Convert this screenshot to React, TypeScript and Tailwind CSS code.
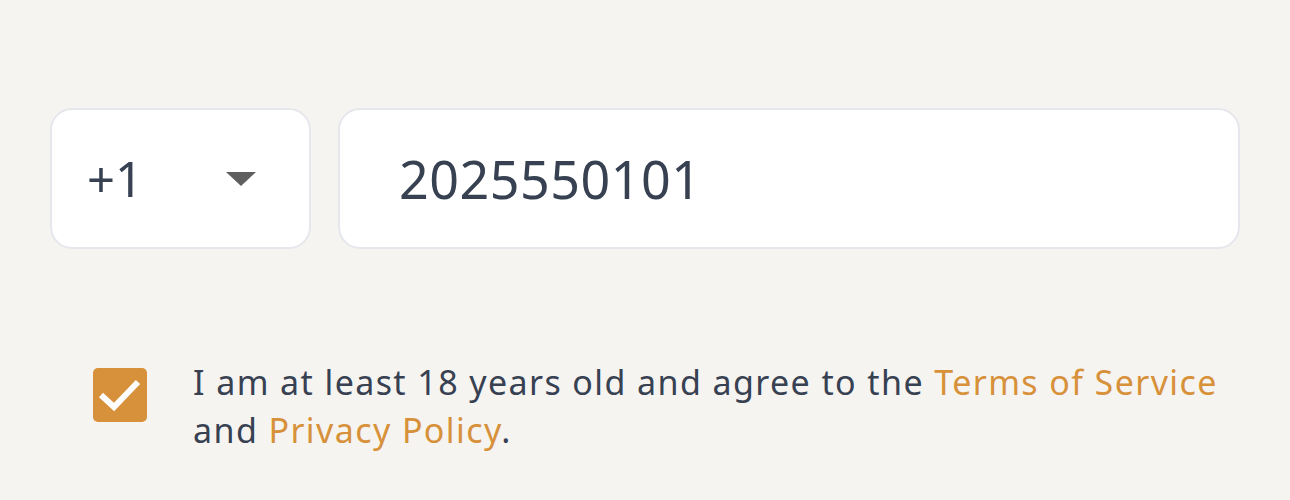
export default function App() {
  return (
    <main
      className="w-[1290px] h-[500px] bg-[#f6f4f1] px-[50px] pt-[108px]"
      style={{ fontFamily: '"Noto Sans", "Open Sans", sans-serif' }}
    >
      <div className="flex gap-[27px]">
        <div className="w-[261px] h-[141px] shrink-0 bg-white border-[2.5px] border-[#e6e7ec] rounded-[22px] flex items-center justify-between pl-[35px] pr-[53px]">
          <span className="text-[49px] text-[#374151] leading-none">+1</span>
          <svg width="30" height="14" viewBox="0 0 30 14">
            <path d="M0 0 H30 L15 14 Z" fill="#5f5f5f" />
          </svg>
        </div>
        <div className="flex-1 h-[141px] bg-white border-[2.5px] border-[#e6e7ec] rounded-[22px] flex items-center pl-[59px]">
          <span className="text-[52px] text-[#374151] leading-none tracking-[0.5px]">2025550101</span>
        </div>
      </div>
      <div className="flex items-start mt-[119px] pl-[43px]">
        <div className="w-[54px] h-[54px] shrink-0 rounded-[5px] bg-[#d6913a]">
          <svg width="54" height="54" viewBox="0 0 54 54">
            <path d="M8 27 L21 39 L45 14" fill="none" stroke="#ffffff" strokeWidth="6" />
          </svg>
        </div>
        <p className="ml-[46px] -mt-[10px] text-[34px] leading-[48px] text-[#374151] tracking-[1.4px]">
          I am at least 18 years old and agree to the{" "}
          <a className="text-[#d6913a]">Terms of Service</a> and{" "}
          <a className="text-[#d6913a]">Privacy Policy</a>.
        </p>
      </div>
    </main>
  );
}
